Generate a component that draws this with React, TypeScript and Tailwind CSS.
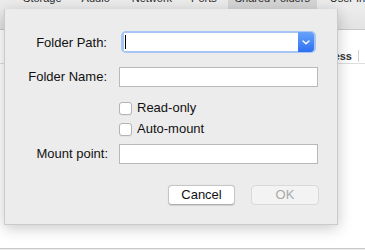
import React from "react";

function Chevron() {
  return (
    <svg width="8" height="5" viewBox="0 0 8 5" fill="none">
      <path d="M1 1 L4 3.8 L7 1" stroke="white" strokeWidth="1.4" strokeLinecap="round" strokeLinejoin="round" />
    </svg>
  );
}

function Checkbox({ label }: { label: string }) {
  return (
    <div className="flex h-[18px] items-center">
      <div className="w-[103px]" />
      <div className="ml-[11px] h-[13px] w-[13px] rounded-[3px] border border-[#b4b4b4] bg-white shadow-[0_0.5px_0.5px_rgba(0,0,0,0.08)]" />
      <span className="ml-[5px]">{label}</span>
    </div>
  );
}

export default function App() {
  const tabs = [
    { name: "Display", ml: "ml-[-35px]" },
    { name: "Storage", ml: "ml-[22px]" },
    { name: "Audio", ml: "ml-[20px]" },
    { name: "Network", ml: "ml-[22px]" },
    { name: "Ports", ml: "ml-[19px]" },
  ];

  return (
    <div className="relative flex h-[250px] w-[365px] flex-col overflow-hidden bg-white font-['Liberation_Sans',Arial,sans-serif] text-[13px] text-[#111]">
      {/* background window: tab strip */}
      <div className="flex h-[9px] shrink-0 overflow-hidden bg-[#ececec] text-[11px] leading-[13px] text-[#2a2a2a]">
        {tabs.map((t) => (
          <span key={t.name} className={`${t.ml} mt-[-8px] whitespace-nowrap`}>
            {t.name}
          </span>
        ))}
        <div className="ml-[11px] flex h-[9px] w-[89px] shrink-0 justify-center bg-[#d6d6d6]">
          <span className="mt-[-8px] whitespace-nowrap">Shared Folders</span>
        </div>
        <span className="ml-[13px] mt-[-8px] whitespace-nowrap">User Interface</span>
      </div>

      {/* background window: pane top band */}
      <div className="h-[21px] shrink-0 border-b border-[#c8c8c8] bg-gradient-to-b from-[#ececec] to-[#e3e3e3]" />
      <div className="h-[19px] shrink-0 bg-white" />

      {/* background window: table header */}
      <div className="flex h-[15px] shrink-0 items-center justify-end border-b border-[#dedede] bg-white pr-[6px] text-[11px] font-bold text-[#333]">
        <span className="mr-[6px]">Access</span>
        <div className="h-[12px] w-px bg-[#d0d0d0]" />
      </div>
      <div className="flex-1 bg-white" />
      <div className="h-px shrink-0 bg-[#c9c9c9]" />
      <div className="h-[1px] shrink-0 bg-[#ededed]" />

      {/* sheet */}
      <div className="absolute left-[4px] top-[9px] flex h-[216px] w-[334px] flex-col border-x border-b border-[#cbcbcb] bg-[#ececec] shadow-[0_3px_14px_rgba(0,0,0,0.22)]">
        {/* Folder Path */}
        <div className="mt-[22px] flex h-[22px] items-center">
          <span className="w-[102px] translate-y-[1px] text-right">Folder Path:</span>
          <div className="ml-[14px] flex h-[22px] w-[195px] items-center rounded-[5px] bg-[#a7c5f4] pl-[2.5px] pr-[2.5px]">
            <div className="relative h-[18px] flex-1 bg-white">
              <div className="absolute left-[1px] top-[2px] h-[14px] w-px bg-black" />
            </div>
            <div className="flex h-[20px] w-[16px] items-center justify-center rounded-r-[4px] bg-gradient-to-b from-[#68a2fa] to-[#2d6ff1]">
              <Chevron />
            </div>
          </div>
        </div>

        {/* Folder Name */}
        <div className="mt-[14px] flex h-[20px] items-center">
          <span className="w-[102px] text-right">Folder Name:</span>
          <div className="ml-[12px] h-[20px] w-[199px] border border-[#b9b9b9] bg-white" />
        </div>

        <div className="mt-[12px]">
          <Checkbox label="Read-only" />
        </div>
        <div className="mt-[3px]">
          <Checkbox label="Auto-mount" />
        </div>

        {/* Mount point */}
        <div className="mt-[6px] flex h-[20px] items-center">
          <span className="w-[103px] text-right">Mount point:</span>
          <div className="ml-[11px] h-[20px] w-[199px] border border-[#b9b9b9] bg-white" />
        </div>

        {/* buttons */}
        <div className="ml-[163px] mt-[21px] flex gap-[16px]">
          <button className="flex h-[20px] w-[67px] items-center justify-center rounded-[4px] border border-[#c6c6c6] border-b-[#adadad] bg-white text-[13px] text-[#111] shadow-[0_0.5px_1px_rgba(0,0,0,0.12)]">
            Cancel
          </button>
          <button className="flex h-[20px] w-[68px] items-center justify-center rounded-[4px] border border-[#d9d9d9] bg-[#f3f3f3] text-[13px] text-[#a9a9a9]">
            OK
          </button>
        </div>
      </div>
    </div>
  );
}
